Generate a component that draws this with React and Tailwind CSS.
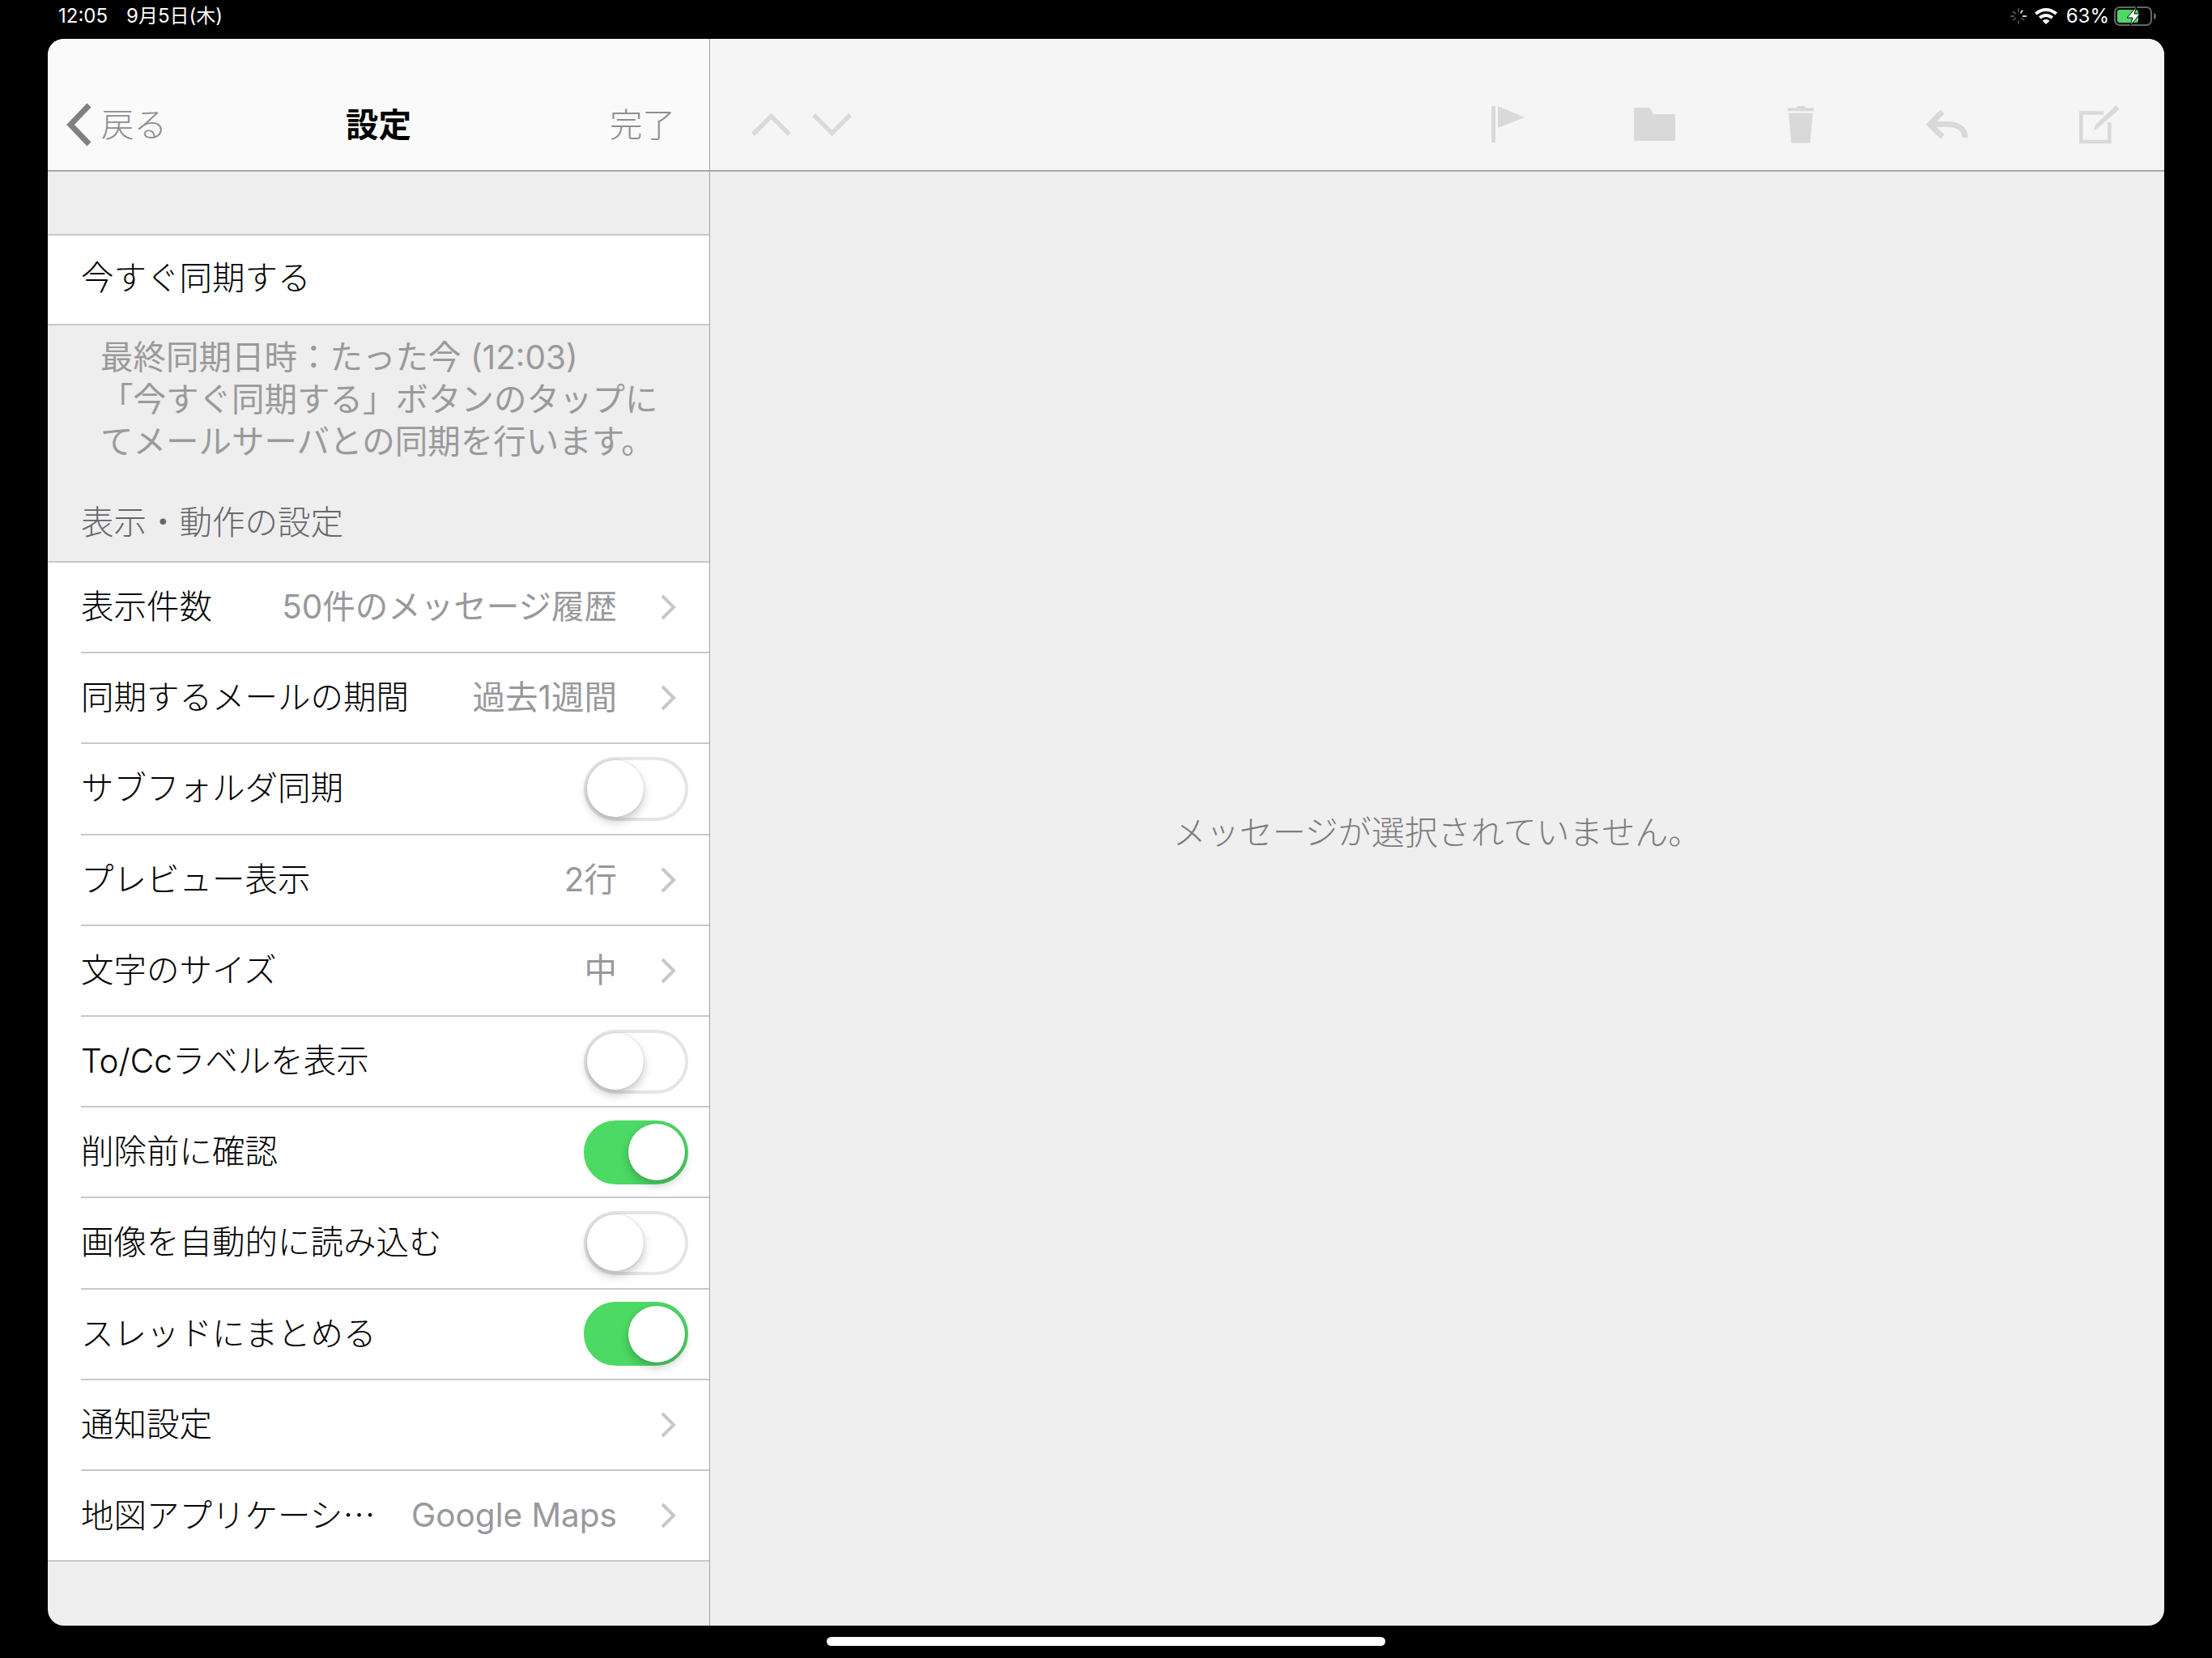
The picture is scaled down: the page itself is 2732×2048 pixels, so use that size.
import React from 'react';

const Chevron = () => (
  <svg width="19" height="32" viewBox="0 0 19 32" fill="none" stroke="#c7c7cc" strokeWidth="4" className="shrink-0">
    <path d="M2 2l14 14L2 30" />
  </svg>
);

const Toggle = ({ on }) => (
  <div className={`flex h-[79px] w-[129px] shrink-0 items-center rounded-full border-4 ${on ? 'justify-end border-[#4cd964] bg-[#4cd964]' : 'justify-start border-[#e5e5e5] bg-white'}`}>
    <div className="h-[70px] w-[70px] rounded-full bg-white shadow-[0_6px_12px_rgba(0,0,0,0.22),0_0_2px_rgba(0,0,0,0.2)]"></div>
  </div>
);

const Row = ({ label, value, toggle, on, last }) => (
  <div className={`flex h-[112.2px] bg-white ${last ? 'border-b-2 border-[#c8c7cc]' : ''}`}>
    <div className={`ml-[41px] flex flex-1 items-center justify-between ${last ? '' : 'border-b-2 border-[#c8c7cc]'} ${toggle ? 'pr-[26px]' : 'pr-[41px]'}`}>
      <span className="text-black">{label}</span>
      {toggle ? (
        <Toggle on={on} />
      ) : (
        <div className="flex items-center gap-[54px]">
          {value && <span className="font-normal text-[#98989d]">{value}</span>}
          <Chevron />
        </div>
      )}
    </div>
  </div>
);

const rows = [
  { label: '表示件数', value: '50件のメッセージ履歴' },
  { label: '同期するメールの期間', value: '過去1週間' },
  { label: 'サブフォルダ同期', toggle: true },
  { label: 'プレビュー表示', value: '2行' },
  { label: '文字のサイズ', value: '中' },
  { label: 'To/Ccラベルを表示', toggle: true },
  { label: '削除前に確認', toggle: true, on: true },
  { label: '画像を自動的に読み込む', toggle: true },
  { label: 'スレッドにまとめる', toggle: true, on: true },
  { label: '通知設定' },
  {
    // Inter's ellipsis sits on the baseline, the picture has the centred CJK one
    label: (
      <>
        地図アプリケーシ<span className="font-['Noto_Sans_CJK_JP',sans-serif]">…</span>
      </>
    ),
    value: 'Google Maps',
    last: true,
  },
];

const StatusIcons = () => (
  <div className="flex items-center">
    <svg width="20" height="20" viewBox="0 0 20 20" stroke="#fff" strokeWidth="1.6" className="mr-[10px]">
      <path d="M10 0v5" opacity="0.35" />
      <path d="M15 2.5l-2.5 4" opacity="0.9" />
      <path d="M20 10h-5" />
      <path d="M17 15l-4-3" opacity="0.3" />
      <path d="M10 20v-5" opacity="0.3" />
      <path d="M3 15l4-3" opacity="0.3" />
      <path d="M0 10h5" opacity="0.4" />
      <path d="M3 4l4 3.5" opacity="0.4" />
    </svg>
    <svg width="28" height="20" viewBox="0 0 28 20" fill="#fff" className="mr-[11px]">
      <path d="M14 0C9 0 4 2 0 5.5L2.6 8.6C5.6 5.8 9.6 4 14 4s8.4 1.8 11.4 4.6L28 5.5C24 2 19 0 14 0z" />
      <path d="M14 7c-3.300 0-6.500 1.300-9 3.500l2.600 3C9.300 12 11.500 11 14 11s4.700 1 6.400 2.500l2.600-3C20.500 8.300 17.300 7 14 7z" />
      <path d="M14 14c-1.700 0-3.200 0.600-4.400 1.700L14 20l4.400-4.300C17.200 14.600 15.700 14 14 14z" />
    </svg>
    <span className="mr-[6px] text-[24px] leading-none text-white">63%</span>
    <svg width="52" height="24" viewBox="0 0 52 24" fill="none">
      <rect x="1" y="1" width="45" height="22" rx="6" stroke="#666" strokeWidth="2" />
      <rect x="4" y="4" width="26" height="16" rx="3" fill="#4cd964" />
      <path d="M49 8c2 0.500 3 2 3 4s-1 3.500-3 4z" fill="#666" />
      <path d="M28 0L16 14h7l-3 10 12-15h-7z" fill="#fff" stroke="#000" strokeWidth="1" />
    </svg>
  </div>
);

const Toolbar = () => (
  <div className="flex h-[164px] items-center border-b-2 border-[#a8a8a8] bg-[#f5f5f5] pt-[49px] pl-[51px] pr-[55px]">
    <svg width="49" height="28" viewBox="0 0 49 28" fill="none" stroke="#dadada" strokeWidth="5.500" className="mr-[26px]">
      <path d="M2 26L24.500 3.500 47 26" />
    </svg>
    <svg width="49" height="28" viewBox="0 0 49 28" fill="none" stroke="#dadada" strokeWidth="5.500">
      <path d="M2 2l22.500 22.500L47 2" />
    </svg>
    <div className="ml-auto flex items-center">
      {/* flag */}
      <svg width="41" height="46" viewBox="0 0 41 46" fill="#d9d9d9">
        <rect x="0" y="0" width="5" height="45" />
        <path d="M8 0l33 14L8 27z" />
      </svg>
      {/* folder */}
      <svg width="51" height="41" viewBox="0 0 51 41" fill="#d9d9d9" className="ml-[135px]">
        <path d="M0 0h19.300l5 8H51v33H0z" />
      </svg>
      {/* trash */}
      <svg width="32" height="46" viewBox="0 0 32 46" fill="#d9d9d9" className="ml-[139px]">
        <path d="M10.300 2.300L11.500 0h9l1.200 2.300H32v4H0v-4z" />
        <path d="M1 8.700h30l-3.300 37H4.300z" />
      </svg>
      {/* reply */}
      <svg width="53" height="40" viewBox="0 0 53 40" fill="none" stroke="#d9d9d9" strokeWidth="7" className="ml-[138px]">
        <path d="M21 4L5.500 19.500 21 35" />
        <path d="M6 19.500h22c13 0 21 6.500 21 16.500" />
      </svg>
      {/* compose */}
      <svg width="50" height="48" viewBox="0 0 50 48" fill="none" className="ml-[137px]">
        <path d="M30 9.600H2.300V45h35.100V21" stroke="#d9d9d9" strokeWidth="4.500" />
        <path d="M45.300 0L49.700 4.700 24.700 26.700 17.700 31.700 20.300 24z" fill="#d9d9d9" />
      </svg>
    </div>
  </div>
);

export default function App() {
  return (
    <div className="flex h-[2048px] w-[2732px] flex-col overflow-hidden bg-black text-[40.5px] leading-[52px] font-light font-['Inter','Noto_Sans_CJK_JP',sans-serif]">
      <div className="flex h-[48px] shrink-0 items-center justify-between pb-2 pl-[72px] pr-[69px] text-[24px] font-normal leading-none text-white">
        <div className="flex gap-[23px]">
          <span>12:05</span>
          <span>9月5日(木)</span>
        </div>
        <StatusIcons />
      </div>

      <div className="mx-[59px] flex h-[1960px] shrink-0 overflow-hidden rounded-[20px]">
        <div className="flex w-[818px] shrink-0 flex-col border-r border-[#a0a0a0] bg-[#eeeeee]">
          <div className="grid h-[164px] grid-cols-[1fr_auto_1fr] items-center border-b-2 border-[#a8a8a8] bg-[#fafafa] pt-[51px]">
            <div className="flex items-center pl-[23px] text-[#8e8e8e]">
              <svg width="31" height="54" viewBox="0 0 31 54" fill="none" stroke="#808080" strokeWidth="7" className="-mt-[2px] mr-[12px]">
                <path d="M28 3L5 27l23 24" />
              </svg>
              <span>戻る</span>
            </div>
            <span className="font-bold text-black">設定</span>
            <span className="pr-[42px] text-right text-[#8e8e8e]">完了</span>
          </div>

          <div className="mt-[77px] flex h-[113px] items-center border-y-2 border-[#c8c7cc] bg-white pb-[3px] pl-[41px] text-black">
            今すぐ同期する
          </div>
          <p className="pt-[14px] pl-[65px] pr-[20px] font-normal text-[#9a9a9a]">
            最終同期日時：たった今 (12:03)
            <br />
            「今すぐ同期する」ボタンのタップに
            <br />
            てメールサーバとの同期を行います。
          </p>
          <h2 className="mt-[48px] pl-[41px] font-[inherit] text-[#66666b]">表示・動作の設定</h2>
          <div className="mt-[21px] border-t-2 border-[#c8c7cc]">
            {rows.map((r, i) => (
              <Row key={i} {...r} />
            ))}
          </div>
        </div>

        <div className="flex flex-1 flex-col bg-[#efefef]">
          <Toolbar />
          <div className="flex justify-center pt-[790px] text-[41px] text-[#7c7c7c]">メッセージが選択されていません。</div>
        </div>
      </div>

      <div className="flex flex-1 justify-center pt-[14px]">
        <div className="h-[11px] w-[690px] rounded-full bg-white"></div>
      </div>
    </div>
  );
}
